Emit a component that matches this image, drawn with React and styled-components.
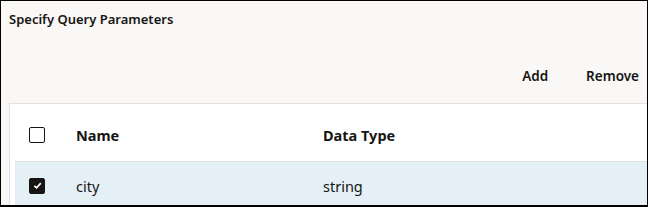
import React, { useState } from 'react';
import styled, { createGlobalStyle } from 'styled-components';

const GlobalStyle = createGlobalStyle`
    html, body {
        margin: 0;
        padding: 0;
        background: #ffffff;
    }
    * {
        box-sizing: border-box;
    }
`;

const Frame = styled.div`
    width: 648px;
    height: 207px;
    overflow: hidden;
    background: #f9f8f6;
    border-style: solid;
    border-color: #000000;
    border-width: 1px 1px 2px 1px;
    font-family: "Noto Sans", "Open Sans", sans-serif;
    color: #161513;
`;

const Title = styled.div`
    padding: 9px 0 0 8px;
    font-size: 13px;
    line-height: 18px;
    font-weight: 600;
`;

const Toolbar = styled.div`
    display: flex;
    justify-content: flex-end;
    align-items: center;
    gap: 38px;
    height: 30px;
    margin-top: 33px;
    padding-right: 8px;
`;

const ToolButton = styled.button`
    border: none;
    background: transparent;
    padding: 0;
    font-family: inherit;
    font-size: 13.5px;
    font-weight: 600;
    color: #161513;
    cursor: pointer;
`;

const Table = styled.div`
    margin: 12px 0 0 8px;
    width: 700px;
    background: #ffffff;
    border-top: 1px solid #e2e1df;
    border-left: 1px solid #e2e1df;
    padding-left: 5px;
`;

const Row = styled.div`
    display: grid;
    grid-template-columns: 61px 247px 1fr;
    align-items: center;
    height: ${(p) => (p.$header ? '58px' : '44px')};
    padding-top: ${(p) => (p.$header ? '4px' : '3px')};
    background: ${(p) => (p.$selected ? '#e4f0f6' : '#ffffff')};
    border-bottom: ${(p) => (p.$header ? '1px solid #e2e1df' : 'none')};
    font-size: 14.5px;
    font-weight: ${(p) => (p.$header ? 700 : 400)};
`;

const CheckCell = styled.div`
    padding-left: 14px;
    display: flex;
    align-items: center;
`;

const Box = styled.span`
    width: 16px;
    height: 16px;
    border: 1.5px solid #161513;
    border-radius: 2px;
    background: ${(p) => (p.$checked ? '#161513' : '#ffffff')};
    display: flex;
    align-items: center;
    justify-content: center;
    cursor: pointer;
`;

function Checkbox({ checked, onToggle }) {
    return (
        <Box $checked={checked} onClick={onToggle}>
            {checked && (
                <svg width="11" height="11" viewBox="0 0 12 12">
                    <path d="M2.5 6.3 L5 8.6 L9.6 3.4" fill="none" stroke="#ffffff" strokeWidth="1.8" />
                </svg>
            )}
        </Box>
    );
}

export default function App() {
    const [params, setParams] = useState([{ name: 'city', type: 'string', checked: true }]);
    const allChecked = params.length > 0 && params.every((p) => p.checked);

    return (
        <>
            <GlobalStyle />
            <Frame>
                <Title>Specify Query Parameters</Title>
                <Toolbar>
                    <ToolButton>Add</ToolButton>
                    <ToolButton>Remove</ToolButton>
                </Toolbar>
                <Table>
                    <Row $header>
                        <CheckCell>
                            <Checkbox
                                checked={false}
                                onToggle={() => setParams(params.map((p) => ({ ...p, checked: !allChecked })))}
                            />
                        </CheckCell>
                        <div>Name</div>
                        <div>Data Type</div>
                    </Row>
                    {params.map((p, i) => (
                        <Row key={p.name} $selected={p.checked}>
                            <CheckCell>
                                <Checkbox
                                    checked={p.checked}
                                    onToggle={() =>
                                        setParams(params.map((q, j) => (j === i ? { ...q, checked: !q.checked } : q)))
                                    }
                                />
                            </CheckCell>
                            <div>{p.name}</div>
                            <div>{p.type}</div>
                        </Row>
                    ))}
                </Table>
            </Frame>
        </>
    );
}
